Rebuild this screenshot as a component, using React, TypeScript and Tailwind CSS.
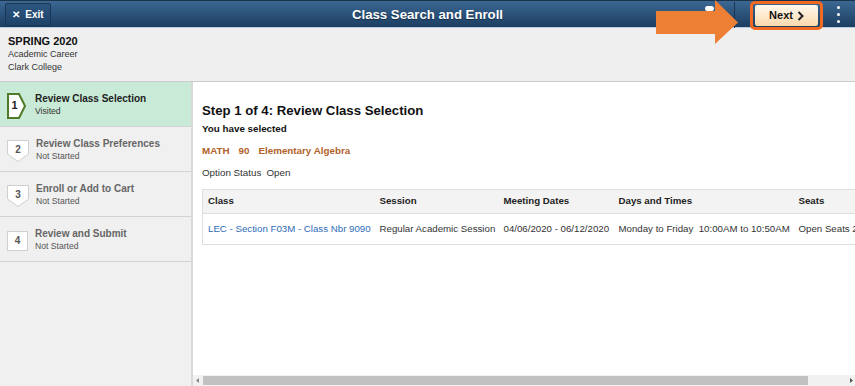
import React from 'react';

const FONT = "font-['Liberation_Sans',Arial,sans-serif]";

interface Step {
  n: number;
  title: string;
  status: string;
  kind: 'active' | 'down' | 'square';
}

const STEPS: Step[] = [
  { n: 1, title: 'Review Class Selection', status: 'Visited', kind: 'active' },
  { n: 2, title: 'Review Class Preferences', status: 'Not Started', kind: 'down' },
  { n: 3, title: 'Enroll or Add to Cart', status: 'Not Started', kind: 'down' },
  { n: 4, title: 'Review and Submit', status: 'Not Started', kind: 'square' },
];

function StepBadge({ step }: { step: Step }) {
  if (step.kind === 'active') {
    return (
      <div className="relative h-[26px] w-[21px] shrink-0">
        <svg width="21" height="26" viewBox="0 0 21 26" className="absolute inset-0">
          <path d="M1 1 H12 L18 13 L12 25 H1 Z" fill="#ffffff" stroke="#4f7a28" strokeWidth="2" />
        </svg>
        <span className="absolute left-0 top-0 flex h-[26px] w-[15px] items-center justify-center text-[11px] font-bold text-[#222]">
          {step.n}
        </span>
      </div>
    );
  }
  if (step.kind === 'down') {
    return (
      <div className="relative h-[22px] w-[22px] shrink-0">
        <svg width="22" height="22" viewBox="0 0 22 22" className="absolute inset-0">
          <path d="M0.5 0.5 H21.5 V14 L11 21.5 L0.5 14 Z" fill="#ffffff" stroke="#cfcfcf" strokeWidth="1" />
        </svg>
        <span className="absolute left-0 top-0 flex h-[16px] w-[22px] items-center justify-center pt-[3px] text-[10px] font-bold text-[#555]">
          {step.n}
        </span>
      </div>
    );
  }
  return (
    <div className="flex h-[20px] w-[21px] shrink-0 items-center justify-center border border-[#cfcfcf] bg-white text-[10px] font-bold text-[#555]">
      {step.n}
    </div>
  );
}

function TopBar() {
  return (
    <div className="relative grid h-[27px] shrink-0 grid-cols-[1fr_auto_1fr] items-center border-t border-[#1b324b] bg-gradient-to-b from-[#3b6893] to-[#1d3e62]">
      <div className="flex">
        <div className="ml-[5px] flex h-[23px] w-[46px] items-center justify-center gap-[5px] rounded-[2px] border border-[#1a3756] bg-gradient-to-b from-[#2c5680] to-[#1f4368]">
          <span className="text-[10px] font-bold leading-none text-white">✕</span>
          <span className="text-[10px] font-bold text-white">Exit</span>
        </div>
      </div>
      <div className="text-center text-[13.2px] font-bold text-white [text-shadow:0_1px_1px_rgba(0,0,0,0.4)]">
        Class Search and Enroll
      </div>
      <div className="flex items-center justify-end">
        <div className="mr-[20px] mt-[-12px] h-[5px] w-[9px] rounded-full bg-white" />
        <div className="mr-[15px] h-[26px] w-px bg-[#1a324c]" />
        <div className="-mb-[2px] flex h-[29px] w-[73px] items-center justify-center rounded-[5px] border-[3px] border-[#f26a21]">
          <div className="flex h-[21px] w-[63px] items-center justify-center gap-[4px] rounded-[2px] bg-gradient-to-b from-[#fff9ef] to-[#fcd9ab]">
            <span className="text-[11px] font-bold text-[#111]">Next</span>
            <svg width="7" height="10" viewBox="0 0 7 10">
              <path d="M1.5 1 L5.5 5 L1.5 9" fill="none" stroke="#222" strokeWidth="2" />
            </svg>
          </div>
        </div>
        <div className="ml-[14px] mr-[15px] flex flex-col gap-[4px]">
          <span className="h-[3px] w-[3px] rounded-full bg-white" />
          <span className="h-[3px] w-[3px] rounded-full bg-white" />
          <span className="h-[3px] w-[3px] rounded-full bg-white" />
        </div>
      </div>
      {/* annotation arrow */}
      <svg width="84" height="46" viewBox="0 0 84 46" className="absolute left-[656px] top-[-2px]">
        <path d="M0 12 H59 V1 L82 23.5 L59 45 V35 H0 Z" fill="#ee8035" />
      </svg>
    </div>
  );
}

const COLS = [
  { label: 'Class', w: 'w-[172px]' },
  { label: 'Session', w: 'w-[124px]' },
  { label: 'Meeting Dates', w: 'w-[115px]' },
  { label: 'Days and Times', w: 'w-[180px]' },
  { label: 'Seats', w: 'w-[120px]' },
];

export default function App() {
  return (
    <div className={`${FONT} flex h-[386px] w-[855px] flex-col overflow-hidden bg-white text-[#333]`}>
      <TopBar />
      <div className="flex h-[55px] shrink-0 flex-col justify-center border-t border-b border-t-[#b9cde2] border-b-[#cccccc] bg-[#efefef] pb-[2px] pl-[8px]">
        <div className="text-[11px] font-bold leading-[14px] text-[#111]">SPRING 2020</div>
        <div className="text-[9px] leading-[13px] text-[#333]">Academic Career</div>
        <div className="text-[9px] leading-[13px] text-[#333]">Clark College</div>
      </div>
      <div className="flex min-h-0 flex-1">
        <div className="w-[193px] shrink-0 border-r-2 border-[#d9d9d9] bg-[#f0f0f0]">
          {STEPS.map((s) => (
            <div
              key={s.n}
              className={`flex h-[45px] items-center gap-[7px] border-b border-[#d3d3d3] pl-[7px] pt-[3px] ${
                s.kind === 'active' ? 'bg-[#c8ead6]' : ''
              }`}
            >
              <StepBadge step={s} />
              <div className="-mt-[1px] flex flex-col">
                <span
                  className={`text-[10px] font-bold leading-[13px] ${
                    s.kind === 'active' ? 'text-[#222]' : 'text-[#666]'
                  }`}
                >
                  {s.title}
                </span>
                <span className={`text-[8.6px] leading-[13px] ${s.kind === 'active' ? 'text-[#333]' : 'text-[#555]'}`}>
                  {s.status}
                </span>
              </div>
            </div>
          ))}
        </div>
        <div className="flex min-w-0 flex-1 flex-col">
          <div className="min-h-0 flex-1 overflow-hidden pl-[9px] pt-[20px]">
            <h1 className="text-[13.2px] font-bold leading-[17px] text-[#111]">Step 1 of 4: Review Class Selection</h1>
            <div className="mt-[3px] text-[9.8px] font-bold leading-[13px] text-[#111]">You have selected</div>
            <div className="mt-[9px] flex gap-[9px] text-[9.8px] font-bold leading-[13px] text-[#b0612a]">
              <span>MATH</span>
              <span>90</span>
              <span>Elementary Algebra</span>
            </div>
            <div className="mt-[9px] flex gap-[5px] text-[9.8px] leading-[13px] text-[#333]">
              <span>Option Status</span>
              <span>Open</span>
            </div>
            <table className="mt-[10px] w-[711px] table-fixed border-collapse whitespace-nowrap text-[9.7px]">
              <thead>
                <tr className="h-[24px] border-y border-l border-[#dedede] bg-[#f3f3f3] text-left">
                  {COLS.map((c) => (
                    <th key={c.label} className={`${c.w} pl-[5px] font-bold text-[#222]`}>
                      {c.label}
                    </th>
                  ))}
                </tr>
              </thead>
              <tbody>
                <tr className="h-[31px] border-b border-l border-[#dedede]">
                  <td className="pl-[5px] text-[#2f6cba]">LEC - Section F03M - Class Nbr 9090</td>
                  <td className="pl-[5px] text-[#333]">Regular Academic Session</td>
                  <td className="pl-[5px] text-[#333]">04/06/2020 - 06/12/2020</td>
                  <td className="pl-[5px] text-[#333]">Monday to Friday&nbsp;&nbsp;10:00AM to 10:50AM</td>
                  <td className="pl-[5px] text-[#333]">Open Seats 25</td>
                </tr>
              </tbody>
            </table>
          </div>
          <div className="flex h-[11px] shrink-0 items-center bg-[#f1f1f1]">
            <svg width="10" height="11" viewBox="0 0 10 11">
              <path d="M6 3 L3 5.5 L6 8 Z" fill="#888" />
            </svg>
            <div className="h-[9px] w-[605px] bg-[#c1c1c1]" />
            <div className="flex-1" />
            <svg width="8" height="11" viewBox="0 0 8 11">
              <path d="M3 3 L6 5.5 L3 8 Z" fill="#555" />
            </svg>
          </div>
        </div>
      </div>
    </div>
  );
}
